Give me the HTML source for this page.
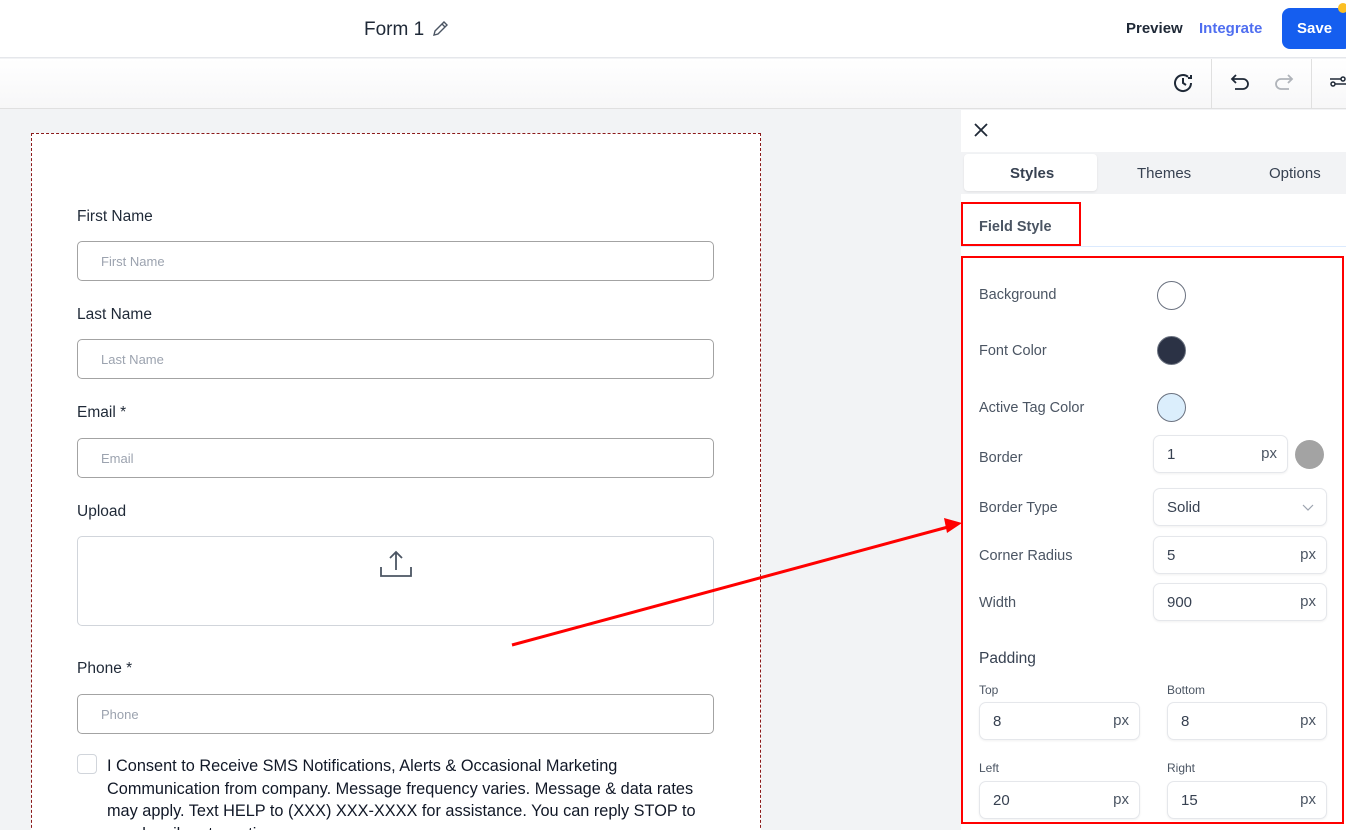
<!DOCTYPE html>
<html style="width:1346px;height:830px;overflow:hidden"><head><style>
*{box-sizing:border-box;margin:0;padding:0}
body{width:1346px;height:830px;overflow:hidden;position:relative;background:#f2f3f5;font-family:"Liberation Sans",sans-serif;color:#1f2937}
.a{position:absolute}
.lbl{position:absolute;left:77px;font-size:15.5px;color:#1f2937}
.inp{position:absolute;left:77px;width:637px;height:40px;border:1px solid #a3a3a3;border-radius:5px;background:#fff;font-size:13px;color:#9ca3af;padding:12px 0 0 23px}
.pl{position:absolute;left:979px;font-size:14.5px;color:#4b5563}
.fi{position:absolute;border:1px solid #e5e7eb;border-radius:7px;background:#fff;height:38px;font-size:15px;color:#374151;padding:10px 0 0 13px;box-shadow:0 1px 2px rgba(0,0,0,.06)}
.fi span{position:absolute;right:10px;top:9px;color:#4b5563}
.sl{position:absolute;font-size:12px;color:#4b5563}
</style></head><body>
<div class="a" style="left:0;top:0;width:1346px;height:58px;background:#fff;border-bottom:1px solid #e5e7eb"></div>
<div class="a" style="left:364px;top:19px;font-size:19px;color:#1f2937">Form 1</div>
<svg class="a" style="left:431px;top:20px" width="18" height="18" viewBox="0 0 18 18"><path d="M3 15l1-4 9-9 3 3-9 9z M11 4l3 3" fill="none" stroke="#4b5563" stroke-width="1.4"/></svg>
<div class="a" style="left:1126px;top:20px;font-size:15px;font-weight:bold;color:#1f2937">Preview</div>
<div class="a" style="left:1199px;top:20px;font-size:15px;font-weight:bold;color:#4f6ef0">Integrate</div>
<div class="a" style="left:1282px;top:8px;width:70px;height:41px;background:#155eef;border-radius:8px;color:#fff;font-weight:bold;font-size:15px;padding:12px 0 0 15px">Save</div>
<div class="a" style="left:1338px;top:3px;width:10px;height:10px;border-radius:50%;background:#fbbf24"></div>
<div class="a" style="left:0;top:59px;width:1346px;height:50px;background:linear-gradient(#fff,#f7f7f8);border-bottom:1px solid #e0e0e0"></div>
<div class="a" style="left:1211px;top:59px;width:1px;height:50px;background:#e0e0e0"></div>
<div class="a" style="left:1311px;top:59px;width:1px;height:50px;background:#e0e0e0"></div>
<svg class="a" style="left:1172px;top:72px" width="22" height="22" viewBox="0 0 22 22"><path d="M19 11a8 8 0 1 1-3-6.2M19 3v3h-3" fill="none" stroke="#1f2937" stroke-width="2"/><path d="M11 6v5l3 2" fill="none" stroke="#1f2937" stroke-width="2"/></svg>
<svg class="a" style="left:1230px;top:72px" width="22" height="20" viewBox="0 0 22 20"><path d="M6 3L2 7l4 4M2 7h11a5 5 0 0 1 0 10H5" fill="none" stroke="#1f2937" stroke-width="1.8"/></svg>
<svg class="a" style="left:1272px;top:72px" width="22" height="20" viewBox="0 0 22 20"><path d="M16 3l4 4-4 4M20 7H9a5 5 0 0 0 0 10h8" fill="none" stroke="#b0b4ba" stroke-width="1.8"/></svg>
<svg class="a" style="left:1330px;top:74px" width="16" height="16" viewBox="0 0 16 16"><circle cx="3" cy="10" r="2" fill="none" stroke="#1f2937" stroke-width="1.5"/><circle cx="13" cy="5" r="2" fill="none" stroke="#1f2937" stroke-width="1.5"/><path d="M5 10h11M0 5h11" stroke="#1f2937" stroke-width="1.5"/></svg>

<div class="a" style="left:31px;top:133px;width:730px;height:720px;background:#fff;border:1px dashed #8b1a1a"></div>
<div class="lbl" style="top:208px">First Name</div>
<div class="inp" style="top:241px">First Name</div>
<div class="lbl" style="top:306px">Last Name</div>
<div class="inp" style="top:339px">Last Name</div>
<div class="lbl" style="top:404px">Email *</div>
<div class="inp" style="top:438px">Email</div>
<div class="lbl" style="top:503px">Upload</div>
<div class="inp" style="top:536px;height:90px;border-color:#d1d5db"></div>
<svg class="a" style="left:378px;top:549px" width="36" height="32" viewBox="0 0 36 32"><path d="M18 3v18M12 9l6-6 6 6M3 18v9h30v-9" fill="none" stroke="#4b5563" stroke-width="1.8"/></svg>
<div class="lbl" style="top:660px">Phone *</div>
<div class="inp" style="top:694px">Phone</div>
<div class="a" style="left:77px;top:754px;width:20px;height:20px;border:1px solid #d1d5db;border-radius:4px;background:#fff"></div>
<div class="a" style="left:107px;top:755px;width:610px;font-size:16.3px;line-height:22.5px;color:#111827">I Consent to Receive SMS Notifications, Alerts &amp; Occasional Marketing Communication from company. Message frequency varies. Message &amp; data rates may apply. Text HELP to (XXX) XXX-XXXX for assistance. You can reply STOP to unsubscribe at any time.</div>

<div class="a" style="left:961px;top:110px;width:385px;height:720px;background:#fff"></div>
<svg class="a" style="left:973px;top:122px" width="16" height="16" viewBox="0 0 16 16"><path d="M2 2l12 12M14 2L2 14" stroke="#1f2937" stroke-width="1.8"/></svg>
<div class="a" style="left:961px;top:152px;width:385px;height:42px;background:#f2f3f5"></div>
<div class="a" style="left:964px;top:154px;width:133px;height:37px;background:#fff;border-radius:4px;box-shadow:0 1px 2px rgba(0,0,0,.08)"></div>
<div class="a" style="left:1010px;top:165px;font-size:15px;font-weight:bold;color:#374151">Styles</div>
<div class="a" style="left:1137px;top:165px;font-size:15px;color:#374151">Themes</div>
<div class="a" style="left:1269px;top:165px;font-size:15px;color:#374151">Options</div>
<div class="a" style="left:961px;top:246px;width:385px;height:1px;background:#dbeafe"></div>
<div class="a" style="left:961px;top:202px;width:120px;height:44px;border:2px solid #ff0000"></div>
<div class="a" style="left:979px;top:219px;font-size:14.5px;font-weight:bold;color:#4b5563">Field Style</div>
<div class="a" style="left:961px;top:256px;width:383px;height:568px;border:2.5px solid #ff0000"></div>
<div class="pl" style="top:287px">Background</div>
<div class="a" style="left:1157px;top:281px;width:29px;height:29px;border-radius:50%;border:1px solid #6b7280;background:#fff"></div>
<div class="pl" style="top:343px">Font Color</div>
<div class="a" style="left:1157px;top:336px;width:29px;height:29px;border-radius:50%;background:#2b3245;border:1px solid #6b7280"></div>
<div class="pl" style="top:400px">Active Tag Color</div>
<div class="a" style="left:1157px;top:393px;width:29px;height:29px;border-radius:50%;background:#dbeefc;border:1px solid #6b7280"></div>
<div class="pl" style="top:450px">Border</div>
<div class="fi" style="left:1153px;top:435px;width:135px">1<span>px</span></div>
<div class="a" style="left:1295px;top:440px;width:29px;height:29px;border-radius:50%;background:#a3a3a3"></div>
<div class="pl" style="top:500px">Border Type</div>
<div class="fi" style="left:1153px;top:488px;width:174px">Solid<svg style="position:absolute;right:12px;top:15px" width="12" height="8" viewBox="0 0 12 8"><path d="M1 1l5 5 5-5" fill="none" stroke="#9ca3af" stroke-width="1.2"/></svg></div>
<div class="pl" style="top:548px">Corner Radius</div>
<div class="fi" style="left:1153px;top:536px;width:174px">5<span>px</span></div>
<div class="pl" style="top:595px">Width</div>
<div class="fi" style="left:1153px;top:583px;width:174px">900<span>px</span></div>
<div class="a" style="left:979px;top:650px;font-size:15.5px;color:#374151">Padding</div>
<div class="sl" style="left:979px;top:683px">Top</div>
<div class="sl" style="left:1167px;top:683px">Bottom</div>
<div class="fi" style="left:979px;top:702px;width:161px">8<span>px</span></div>
<div class="fi" style="left:1167px;top:702px;width:160px">8<span>px</span></div>
<div class="sl" style="left:979px;top:761px">Left</div>
<div class="sl" style="left:1167px;top:761px">Right</div>
<div class="fi" style="left:979px;top:781px;width:161px">20<span>px</span></div>
<div class="fi" style="left:1167px;top:781px;width:160px">15<span>px</span></div>

<svg class="a" style="left:0;top:0" width="1346" height="830"><line x1="512" y1="645" x2="948" y2="527" stroke="#ff0000" stroke-width="3"/><path d="M962 523L944 518L947 533Z" fill="#ff0000"/></svg>
</body></html>
